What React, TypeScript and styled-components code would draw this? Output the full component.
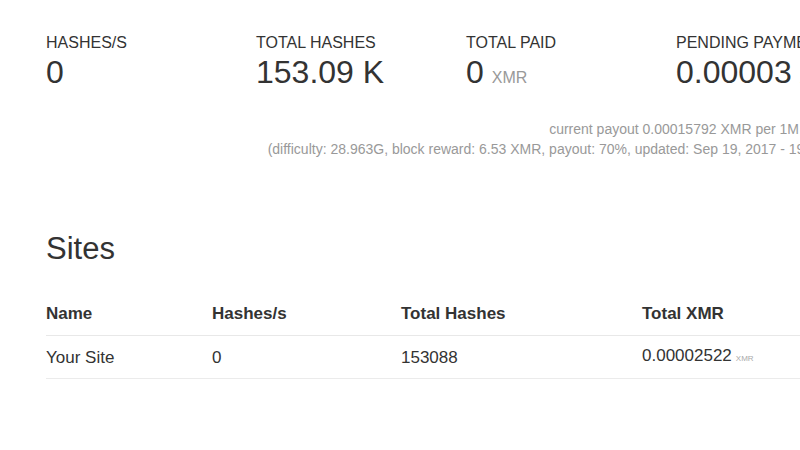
import React from 'react';
import styled, { createGlobalStyle } from 'styled-components';

const GlobalStyle = createGlobalStyle`
  html, body {
    margin: 0;
    padding: 0;
    background: #fff;
    overflow: hidden;
  }
  body {
    font-family: "Liberation Sans", Arial, sans-serif;
    color: #333;
  }
`;

type Stat = { label: string; value: string; unit?: string };

const stats: Stat[] = [
  { label: 'Hashes/s', value: '0' },
  { label: 'Total Hashes', value: '153.09 K' },
  { label: 'Total Paid', value: '0', unit: 'XMR' },
  { label: 'Pending Payment', value: '0.00003', unit: 'XMR' },
];

const sites = [{ name: 'Your Site', hashesPerSecond: '0', totalHashes: '153088', totalXmr: '0.00002522' }];

const App: React.FC = () => {
  return (
    <Page>
      <GlobalStyle />
      <Container>
        <StatsRow>
          {stats.map((s) => (
            <StatCol key={s.label}>
              <StatLabel>{s.label}</StatLabel>
              <StatValue>
                {s.value}
                {s.unit && <StatUnit>{s.unit}</StatUnit>}
              </StatValue>
            </StatCol>
          ))}
        </StatsRow>
        <Info>
          <InfoLine>current payout 0.00015792 XMR per 1M hashes</InfoLine>
          <InfoLine>
            (difficulty: 28.963G, block reward: 6.53 XMR, payout: 70%, updated: Sep 19, 2017 - 19:39:12)
          </InfoLine>
        </Info>
        <Heading>Sites</Heading>
        <Table>
          <thead>
            <tr>
              <Th $width={166}>Name</Th>
              <Th $width={189}>Hashes/s</Th>
              <Th $width={241}>Total Hashes</Th>
              <Th>Total XMR</Th>
            </tr>
          </thead>
          <tbody>
            {sites.map((site) => (
              <tr key={site.name}>
                <Td>{site.name}</Td>
                <Td>{site.hashesPerSecond}</Td>
                <Td>{site.totalHashes}</Td>
                <Td>
                  {site.totalXmr}
                  <TinyUnit>XMR</TinyUnit>
                </Td>
              </tr>
            ))}
          </tbody>
        </Table>
      </Container>
    </Page>
  );
};

export default App;

const Page = styled.div`
  width: 800px;
  height: 450px;
  overflow: hidden;
`;

const Container = styled.div`
  width: 802px;
  padding: 34px 0 0 46px;
`;

const StatsRow = styled.div`
  display: grid;
  grid-template-columns: repeat(4, 210px);
`;

const StatCol = styled.div`
  white-space: nowrap;
`;

const StatLabel = styled.div`
  font-size: 16px;
  line-height: 18px;
  text-transform: uppercase;
  color: #333;
`;

const StatValue = styled.div`
  font-size: 32px;
  line-height: 38px;
  margin-top: 1px;
  color: #333;
`;

const StatUnit = styled.small`
  font-size: 16px;
  color: #999;
  margin-left: 8px;
`;

const Info = styled.div`
  margin-top: 22px;
  text-align: right;
  white-space: nowrap;
`;

const InfoLine = styled.div`
  font-size: 14px;
  line-height: 20px;
  color: #999;
`;

const Heading = styled.h2`
  margin: 70px 0 0;
  font-size: 31px;
  line-height: 40px;
  font-weight: 400;
  color: #333;
`;

const Table = styled.table`
  margin-top: 23px;
  width: 802px;
  border-collapse: collapse;
  font-size: 17px;
`;

const Th = styled.th<{ $width?: number }>`
  text-align: left;
  font-weight: 700;
  padding: 11px 0 10px;
  line-height: 22px;
  border-bottom: 1px solid #e8e8e8;
  width: ${(p) => (p.$width ? `${p.$width}px` : 'auto')};
`;

const Td = styled.td`
  padding: 9px 0 8px;
  line-height: 22px;
  border-bottom: 1px solid #ebebeb;
`;

const TinyUnit = styled.small`
  font-size: 8px;
  color: #aaa;
  margin-left: 4px;
`;
